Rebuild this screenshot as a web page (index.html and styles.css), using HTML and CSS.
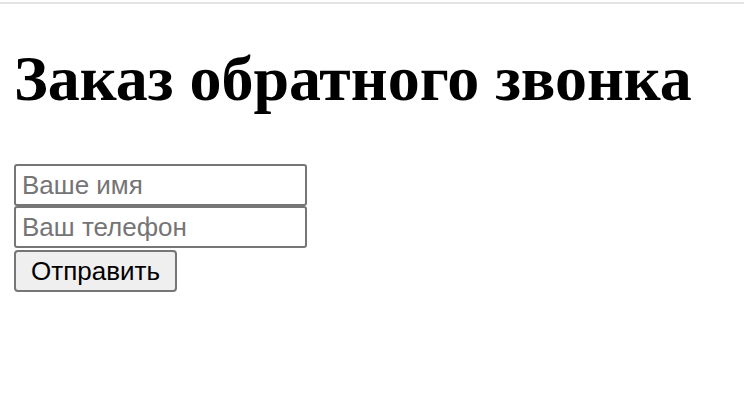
FILE: index.html
```html
<!DOCTYPE html>
<html lang="ru">
<head>
<meta charset="utf-8">
<title>Заказ обратного звонка</title>
<link rel="stylesheet" href="styles.css">
</head>
<body>
<div class="topline"></div>
<main class="page">
  <h1 class="title">Заказ обратного звонка</h1>
  <form class="form">
    <input class="field" type="text" placeholder="Ваше имя">
    <input class="field" type="tel" placeholder="Ваш телефон">
    <button class="submit" type="submit">Отправить</button>
  </form>
</main>
</body>
</html>
```
FILE: styles.css
```css
html, body {
  margin: 0;
  padding: 0;
  background: #ffffff;
}
.topline {
  height: 2px;
  margin-top: 2px;
  background: #e3e3e3;
}
.page {
  padding: 0 14px;
}
.title {
  font-family: "Liberation Serif", "Times New Roman", serif;
  font-weight: bold;
  font-size: 64px;
  line-height: 70px;
  margin: 40px 0 50px 0;
  color: #000;
}
.form {
  display: flex;
  flex-direction: column;
  align-items: flex-start;
}
.field {
  box-sizing: border-box;
  width: 293px;
  height: 42px;
  margin: 0;
  padding: 0 6px;
  border: 2px solid #767676;
  border-radius: 3px;
  font-family: "Liberation Sans", Arial, sans-serif;
  font-size: 26px;
  color: #000;
  background: #fff;
}
.field::placeholder {
  color: #757575;
  opacity: 1;
}
.submit {
  box-sizing: border-box;
  margin-top: 2px;
  width: 163px;
  height: 42px;
  padding: 0;
  border: 2px solid #767676;
  border-radius: 4px;
  background: #efefef;
  font-family: "Liberation Sans", Arial, sans-serif;
  font-size: 26px;
  color: #000;
}
```
